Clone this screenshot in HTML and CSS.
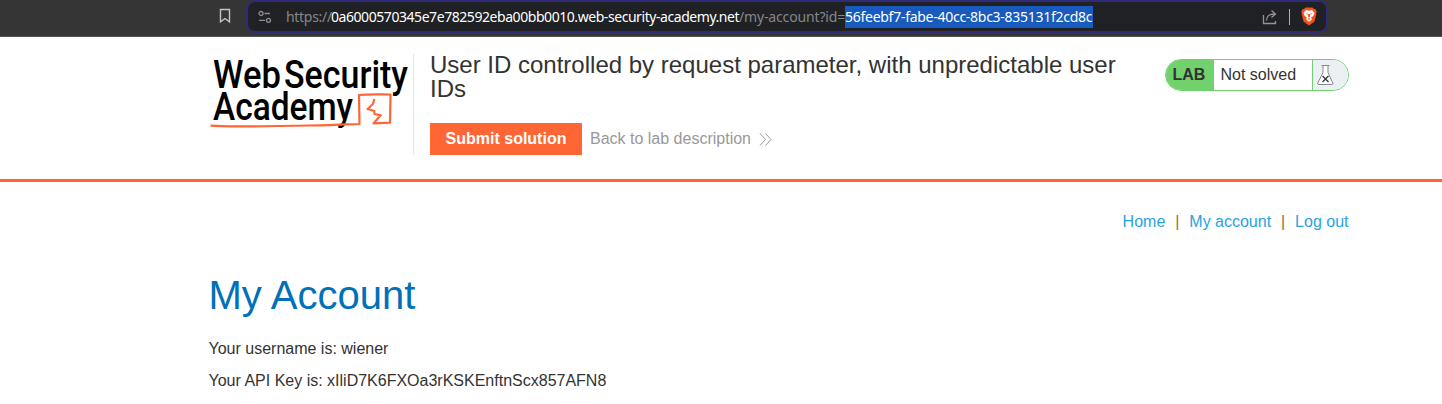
FILE: index.html
```html
<!DOCTYPE html>
<html lang="en">
<head>
<meta charset="utf-8">
<title>User ID controlled by request parameter</title>
<link rel="stylesheet" href="styles.css">
</head>
<body>
<div class="toolbar">
  <svg class="bookmark" width="12" height="16" viewBox="0 0 12 16"><path d="M1.500 1.500h9v12.300l-4.500-3.300-4.500 3.300z"/></svg>
  <div class="address">
    <svg class="tune" width="14" height="14" viewBox="0 0 14 14"><circle cx="3" cy="3.500" r="2"/><path d="M6.500 3.500H12M1 10.300h6"/><circle cx="10.500" cy="10.300" r="2"/></svg>
    <div class="url"><span class="scheme">https://</span><span class="host">0a6000570345e7e782592eba00bb0010.web-security-academy.net</span><span class="path">/my-account?id=</span><span class="selected">56feebf7-fabe-40cc-8bc3-835131f2cd8c</span></div>
    <svg class="share" width="16" height="16" viewBox="0 0 16 16"><path d="M1.500 6v8.500h12V12M4.500 11.500c0-4 2.500-6.500 8-6.500M9.500 1.500L13.500 5 9.500 8.500"/></svg>
    <i class="sep"></i>
    <svg class="brave" width="16" height="19" viewBox="0 0 16 19"><path fill="#f4511e" d="M4.500.5h7l1.500 1.500 1.500.3 1.200 2.200-.6 2 .2 1-2 7.200L8 18.500l-5.300-3.800-2-7.200.2-1-.6-2L1.500 2.300 3 2z"/><path fill="#fff" d="M5 3l3 .7 3-.7 2.500 3-1.300 3-2 1.500.6 2L8 14.800l-2.800-2.300.6-2-2-1.500-1.300-3z"/><path fill="#f4511e" d="M4.500 6.200l2.300.6-.5 1.200zM11.500 6.200l-2.300.6.500 1.200zM7.300 7h1.400l.5 2.500L8 10.300l-1.200-.8zM6.500 11.800L8 11.200l1.500.6L8 13z"/></svg>
  </div>
</div>
<header class="lab-header">
  <div class="container header-row">
    <svg class="logo" width="204.5" height="84" viewBox="0 -8 204.5 84">
      <g class="wordmark"><text x="4" y="33.500" textLength="68" lengthAdjust="spacingAndGlyphs">Web</text><text x="75" y="33.500" textLength="124" lengthAdjust="spacingAndGlyphs">Security</text><text x="4" y="65.500" textLength="140" lengthAdjust="spacingAndGlyphs">Academy</text></g>
      <path class="sketch" d="M1.500 71.700C20 73.500 60 72 100 71.500S135 70 150.500 70L150 41C160 40 170 40.500 181.500 40.500L181 68.700 164.500 69.300 171.700 61.300 165.500 60 165.300 57 158.500 55 164 50 165.300 45"/>
    </svg>
    <div class="lab-info">
      <h2>User ID controlled by request parameter, with unpredictable user IDs</h2>
      <div class="actions">
        <span class="submit">Submit solution</span>
        <span class="back">Back to lab description</span>
        <svg class="chevrons" width="13" height="13" viewBox="0 0 13 13"><path d="M1 .5l5.500 6L1 12.500M6.500.5l5.500 6-5.500 6"/></svg>
      </div>
    </div>
    <div class="status">
      <b>LAB</b><span class="state">Not solved</span>
      <span class="flask"><svg width="17" height="21" viewBox="0 0 17 21"><path fill="#fff" d="M6 .5v7L.8 18q-.5 1.500 1 1.500h13q1.500 0 1-1.500L11 7.500V.5M4.500.5h8"/><path class="cross" d="M5.500 11l6 6M11.500 11l-6 6"/></svg></span>
    </div>
  </div>
</header>
<main class="container">
  <nav><a>Home</a><i>|</i><a>My account</a><i>|</i><a>Log out</a></nav>
  <h1>My Account</h1>
  <p>Your username is: wiener</p>
  <p>Your API Key is: xIliD7K6FXOa3rKSKEnftnScx857AFN8</p>
</main>
</body>
</html>
```
FILE: styles.css
```css
* { box-sizing: border-box; }
body {
  margin: 0;
  height: 404px;
  overflow: hidden;
  background: #fff;
  color: #333332;
  font: 16px/24px "Liberation Sans", Arial, sans-serif;
}
svg { display: block; flex: none; fill: none; }
i { font-style: normal; }
.toolbar {
  display: flex;
  height: 37px;
  padding-left: 219px;
  background: #353535;
  border-bottom: 1px solid #555;
}
.bookmark { margin-top: 8px; stroke: #c4c4c4; stroke-width: 1.4; }
.address {
  display: flex;
  align-items: center;
  width: 1082px;
  height: 33px;
  margin-left: 15px;
  padding: 0 9px 0 10px;
  background: #202124;
  border: 2px solid #302b78;
  border-radius: 9px;
}
.tune { stroke: #8b8d90; stroke-width: 1.3; }
.url {
  display: flex;
  flex: 1;
  margin-left: 14px;
  font: 14px/22px "Noto Sans", sans-serif;
  white-space: nowrap;
  color: #85878a;
}
.url span { height: 22px; }
.scheme { width: 45px; letter-spacing: -.3px; }
.host { width: 408px; letter-spacing: -.44px; color: #fff; }
.path { width: 106px; letter-spacing: -.15px; }
.selected { width: 248px; letter-spacing: -.27px; background: #185abd; color: #fff; }
.share { stroke: #929395; stroke-width: 1.3; }
.sep { width: 1px; height: 16px; margin: 0 11px; background: #b0b0b0; }
.container { width: 1140px; margin-left: 208.5px; }
.lab-header { height: 145px; border-bottom: 3px solid #ff6633; }
.header-row { display: flex; padding-top: 17px; }
.logo { margin-top: -8px; overflow: visible; }
.wordmark { font: 500 38px Roboto, sans-serif; fill: #000; }
.sketch { stroke: #ff6633; stroke-width: 2.2; stroke-linejoin: round; }
.lab-info {
  width: 717px;
  height: 101px;
  padding-left: 16px;
  border-left: 1px solid #e5e5e5;
}
h2 { margin: -1px 0 0; font-size: 24px; line-height: 24px; font-weight: 400; }
.actions { display: flex; align-items: center; margin-top: 22px; }
.submit {
  width: 152px;
  height: 32px;
  line-height: 32px;
  text-align: center;
  font-weight: 700;
  color: #fff;
  background: #ff6633;
}
.back { margin-left: 8px; color: #999; }
.chevrons { margin-left: 8px; stroke: #999; stroke-width: 1; }
.status {
  display: flex;
  width: 184px;
  height: 32px;
  margin: 5px 0 0 34.5px;
  border: 1px solid #70d16d;
  border-radius: 16px;
  overflow: hidden;
  line-height: 30px;
}
.status b { width: 48px; padding-left: 7px; background: #70d16d; }
.state { width: 98px; padding-left: 7px; }
.flask { flex: 1; padding: 5px 4px; border-left: 1px solid #70d16d; background: #eaf0f3; }
.flask svg { stroke: #888; stroke-width: 1; }
.flask .cross { stroke: #333; stroke-width: 1.3; }
nav { display: flex; justify-content: flex-end; padding-top: 28px; color: #29a3e2; }
nav i { width: 24px; text-align: center; color: #956b38; }
h1 { margin: 38px 0 19px; font-size: 40px; line-height: 46px; font-weight: 400; color: #0070b8; }
p { margin: 0 0 8px; }
```
